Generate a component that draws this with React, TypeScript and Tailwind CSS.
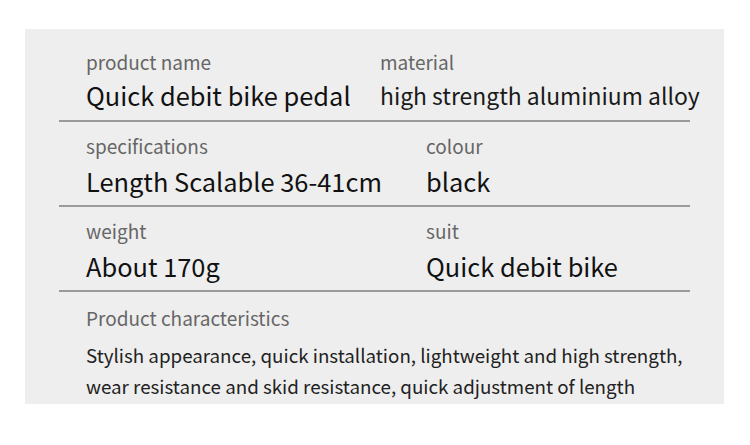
export default function App() {
  const font = { fontFamily: '"Noto Sans CJK SC", "Noto Sans", sans-serif' }
  return (
    <div className="w-[750px] h-[445px] bg-white pt-[29px] pl-[25px]" style={font}>
      <div className="w-[699px] h-[375px] bg-[#eeeeee] pl-[34px] pr-[34px]">
        <div className="grid grid-cols-[321px_1fr] h-[93px] border-b-2 border-[#9a9a9a] pt-[21px] whitespace-nowrap">
          <div className="pl-[27px]">
            <div className="text-[19px] leading-[24px] text-[#666]">product name</div>
            <div className="text-[25.4px] leading-[36px] text-[#111] mt-[3px]">Quick debit bike pedal</div>
          </div>
          <div>
            <div className="text-[19px] leading-[24px] text-[#666]">material</div>
            <div className="text-[22.9px] leading-[36px] text-[#1a1a1a] mt-[3px]">high strength aluminium alloy</div>
          </div>
        </div>
        <div className="grid grid-cols-[367px_1fr] h-[85px] border-b-2 border-[#9a9a9a] pt-[12px] whitespace-nowrap">
          <div className="pl-[27px]">
            <div className="text-[19px] leading-[24px] text-[#666]">specifications</div>
            <div className="text-[25.4px] leading-[36px] text-[#111] mt-[5px]">Length Scalable 36-41cm</div>
          </div>
          <div>
            <div className="text-[19px] leading-[24px] text-[#666]">colour</div>
            <div className="text-[25.4px] leading-[36px] text-[#111] mt-[5px]">black</div>
          </div>
        </div>
        <div className="grid grid-cols-[367px_1fr] h-[85px] border-b-2 border-[#9a9a9a] pt-[12px] whitespace-nowrap">
          <div className="pl-[27px]">
            <div className="text-[19px] leading-[24px] text-[#666]">weight</div>
            <div className="text-[25.4px] leading-[36px] text-[#111] mt-[5px]">About 170g</div>
          </div>
          <div>
            <div className="text-[19px] leading-[24px] text-[#666]">suit</div>
            <div className="text-[25.4px] leading-[36px] text-[#111] mt-[5px]">Quick debit bike</div>
          </div>
        </div>
        <div className="pl-[27px] pt-[14px] whitespace-nowrap">
          <div className="text-[19px] leading-[24px] text-[#666]">Product characteristics</div>
          <div className="text-[18.75px] leading-[31px] text-[#222] mt-[9px]">
            Stylish appearance, quick installation, lightweight and high strength,
            <br />
            wear resistance and skid resistance, quick adjustment of length
          </div>
        </div>
      </div>
    </div>
  )
}
